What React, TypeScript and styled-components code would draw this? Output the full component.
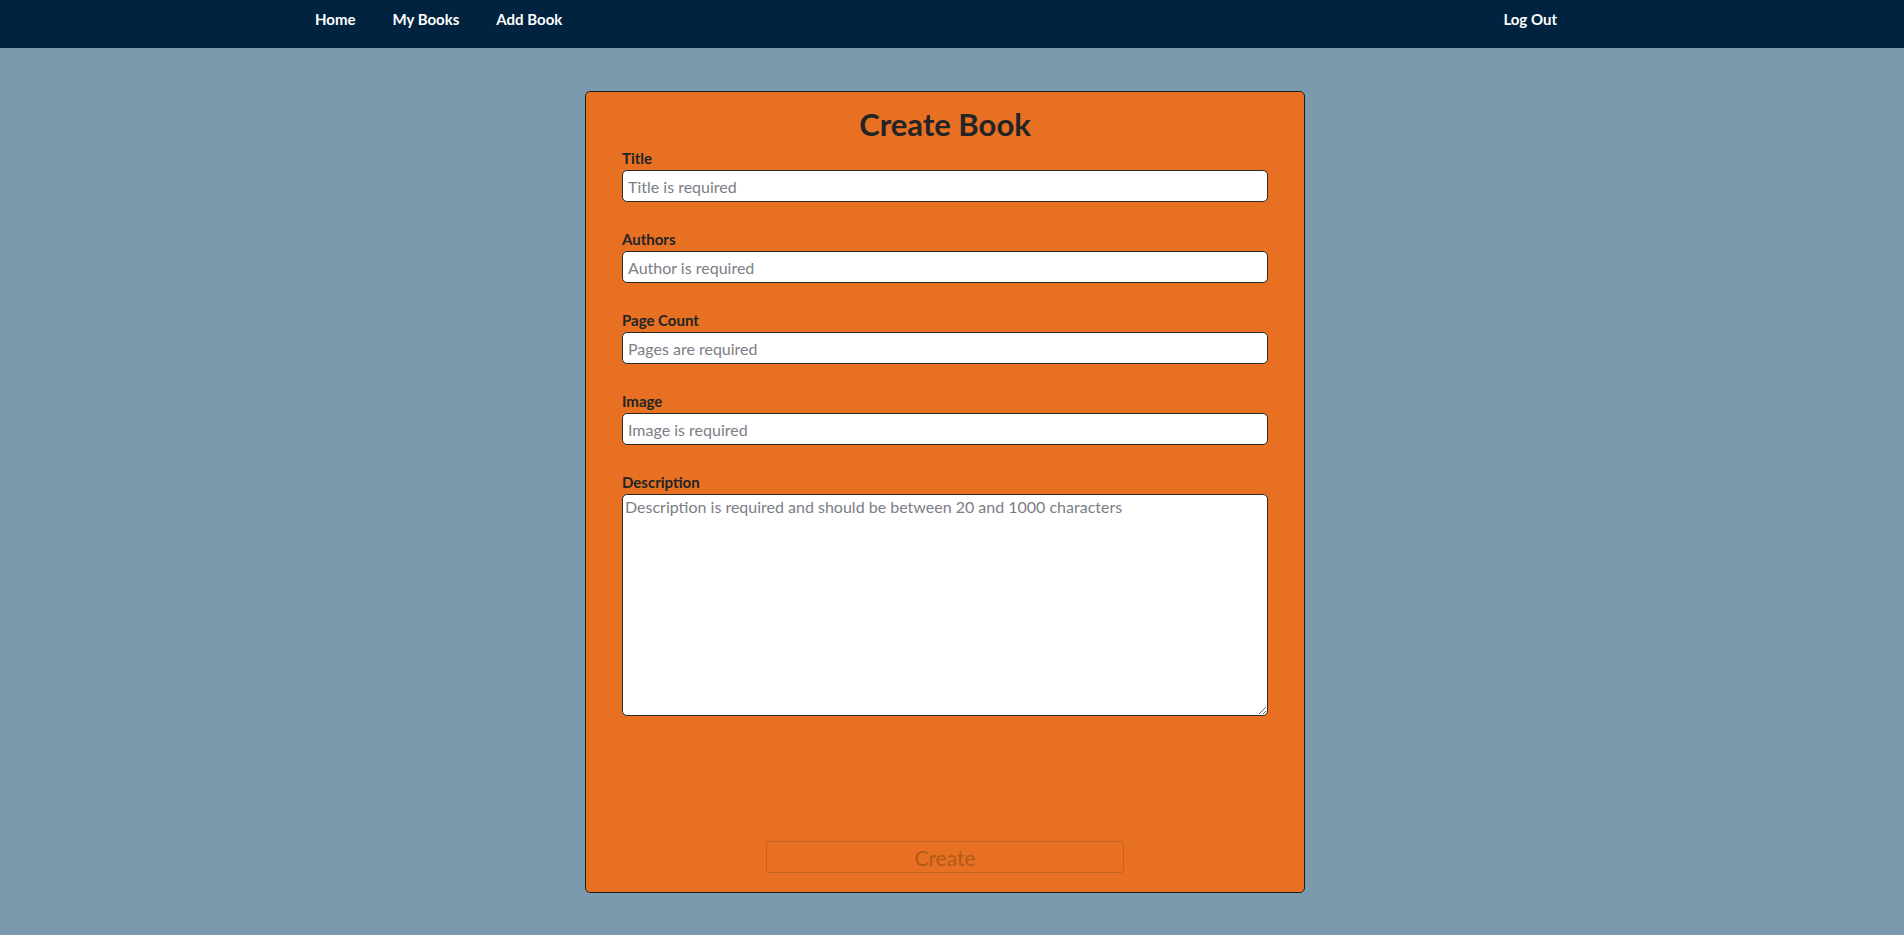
import styled, { createGlobalStyle } from 'styled-components';

const GlobalStyle = createGlobalStyle`
    body {
        margin: 0;
        background: #7b9aae;
        font-family: Lato, "Open Sans", sans-serif;
    }
    * {
        box-sizing: border-box;
    }
`

const fields = [
    { label: 'Title', placeholder: 'Title is required' },
    { label: 'Authors', placeholder: 'Author is required' },
    { label: 'Page Count', placeholder: 'Pages are required' },
    { label: 'Image', placeholder: 'Image is required' },
];

export default function App() {
    return (
        <>
            <GlobalStyle />
            <NavBar>
                <NavInner>
                    <NavLinks>
                        <NavLink href="#">Home</NavLink>
                        <NavLink href="#">My Books</NavLink>
                        <NavLink href="#">Add Book</NavLink>
                    </NavLinks>
                    <NavLink href="#">Log Out</NavLink>
                </NavInner>
            </NavBar>
            <Main>
                <Card>
                    <Heading>Create Book</Heading>
                    {fields.map((f) => (
                        <Field key={f.label}>
                            <Label>{f.label}</Label>
                            <Input type="text" placeholder={f.placeholder} />
                        </Field>
                    ))}
                    <Field>
                        <Label>Description</Label>
                        <TextArea placeholder="Description is required and should be between 20 and 1000 characters" />
                    </Field>
                    <SubmitRow>
                        <SubmitButton disabled>Create</SubmitButton>
                    </SubmitRow>
                </Card>
            </Main>
        </>
    );
}

const NavBar = styled.nav`
    height: 48px;
    background: #012340;
`

const NavInner = styled.div`
    width: 1320px;
    height: 100%;
    margin: 0 auto;
    padding: 0 55px 10px 23px;
    display: flex;
    align-items: center;
    justify-content: space-between;
`

const NavLinks = styled.div`
    display: flex;
    gap: 37px;
`

const NavLink = styled.a`
    color: #ffffff;
    font-size: 15px;
    font-weight: 700;
    text-decoration: none;
`

const Main = styled.main`
    padding: 43px 14px 40px 0;
`

const Card = styled.div`
    width: 720px;
    height: 802px;
    margin: 0 auto;
    padding: 14px 36px 19px;
    background: #e77022;
    border: 1px solid #1e1e1e;
    border-radius: 5px;
    display: flex;
    flex-direction: column;
`

const Heading = styled.h1`
    margin: 0 0 8px;
    font-size: 31px;
    line-height: 36px;
    font-weight: 700;
    text-align: center;
    color: #222426;
`

const Field = styled.div`
    display: flex;
    flex-direction: column;
    margin-bottom: 29px;
`

const Label = styled.label`
    font-size: 15px;
    line-height: 17px;
    font-weight: 700;
    color: #222426;
    margin-bottom: 3px;
`

const Input = styled.input`
    height: 32px;
    padding: 0 5px;
    font-family: inherit;
    font-size: 16px;
    background: #ffffff;
    border: 1px solid #2a2a2a;
    border-radius: 5px;
    outline: none;

    &::placeholder {
        color: #7d7d86;
    }
`

const TextArea = styled.textarea`
    height: 222px;
    padding: 2px;
    font-family: inherit;
    font-size: 16px;
    background: #ffffff;
    border: 1px solid #2a2a2a;
    border-radius: 5px;
    outline: none;

    &::placeholder {
        color: #7d7d86;
    }
`

const SubmitRow = styled.div`
    margin-top: auto;
    display: flex;
    justify-content: center;
`

const SubmitButton = styled.button`
    width: 358px;
    height: 32px;
    font-family: inherit;
    font-size: 21px;
    color: #b45a1c;
    background: transparent;
    border: 1px solid #c2621f;
    border-radius: 3px;
`
